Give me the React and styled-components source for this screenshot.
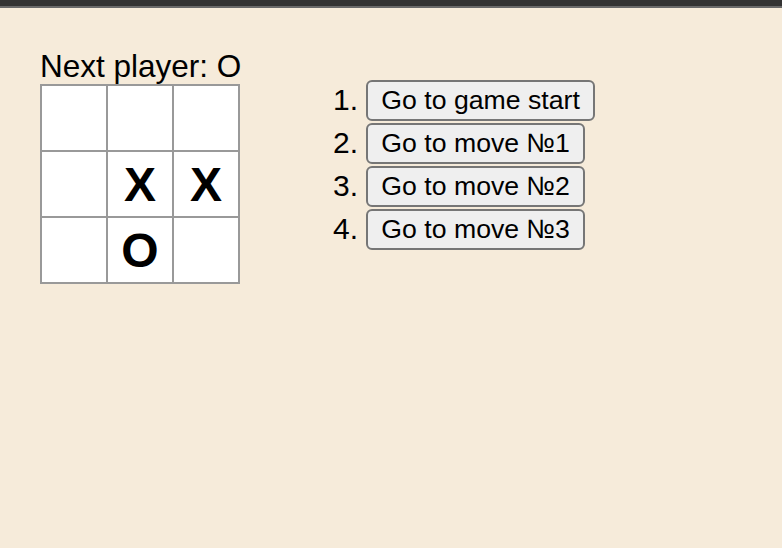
import styled, { createGlobalStyle } from "styled-components"

const GlobalStyle = createGlobalStyle`
    html, body {
        margin: 0;
        padding: 0;
        background-color: #f6ebda;
    }
    * {
        box-sizing: border-box;
    }
`

const TopBar = styled.div`
    height: 8px;
    background-color: #333333;
    border-bottom: 2px solid #6a6a6a;
`

const Page = styled.div`
    padding: 40px;
    font-family: "Liberation Sans", Arial, sans-serif;
    color: #000000;
`

const Game = styled.div`
    display: flex;
    align-items: flex-start;
`

const BoardColumn = styled.div`
    display: flex;
    flex-direction: column;
`

const Status = styled.div`
    font-size: 31.5px;
    line-height: 36px;
    height: 36px;
    white-space: nowrap;
`

const Board = styled.div`
    display: grid;
    grid-template-columns: repeat(3, 64px);
    grid-auto-rows: 64px;
    gap: 2px;
    padding: 2px;
    width: 200px;
    background-color: #999999;
`

const Square = styled.button`
    background: #ffffff;
    border: none;
    padding: 0;
    margin: 0;
    font-family: "Liberation Sans", Arial, sans-serif;
    font-size: 48px;
    font-weight: bold;
    color: #000000;
    display: flex;
    align-items: center;
    justify-content: center;
`

const Info = styled.div`
    margin-left: 40px;
`

const Moves = styled.ol`
    margin: 32px 0 0;
    padding-left: 85px;
    font-size: 30px;
`

const Move = styled.li`
    height: 43px;
    line-height: 40px;
`

const JumpButton = styled.button`
    font-family: "Liberation Sans", Arial, sans-serif;
    font-size: 26.67px;
    line-height: 31px;
    padding: 3px 13px;
    border: 2px solid #767676;
    border-radius: 6px;
    background-color: #efefef;
    color: #000000;
    vertical-align: top;
`

const squares = [null, null, null, null, "X", "X", null, "O", null]
const moves = ["Go to game start", "Go to move №1", "Go to move №2", "Go to move №3"]

export default function App() {
    return (
        <>
            <GlobalStyle />
            <TopBar />
            <Page>
                <Game>
                    <BoardColumn>
                        <Status>Next player: O</Status>
                        <Board>
                            {squares.map((value, i) => (
                                <Square key={i}>{value}</Square>
                            ))}
                        </Board>
                    </BoardColumn>
                    <Info>
                        <Moves>
                            {moves.map((label) => (
                                <Move key={label}>
                                    <JumpButton>{label}</JumpButton>
                                </Move>
                            ))}
                        </Moves>
                    </Info>
                </Game>
            </Page>
        </>
    )
}
